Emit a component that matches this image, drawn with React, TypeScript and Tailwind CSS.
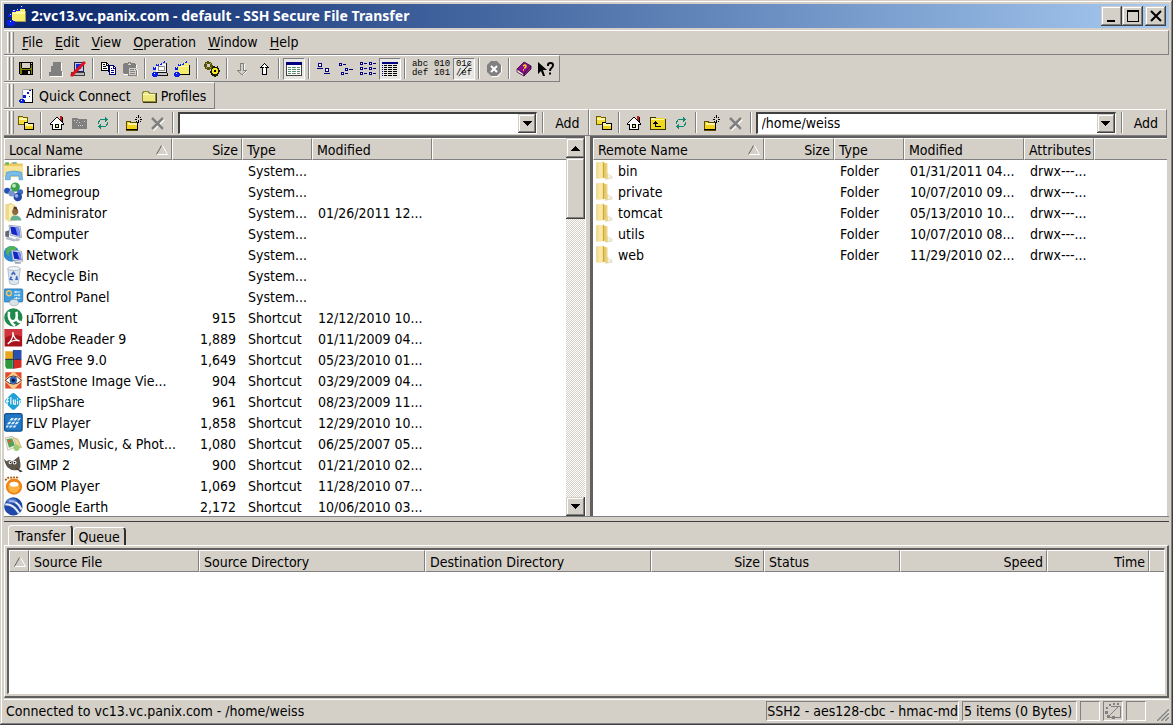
import { useState, type ReactNode } from 'react';

const FONT = "font-['DejaVu_Sans_Condensed','Noto_Sans',sans-serif]";
const RAISED =
  'bg-[#d4d0c8] shadow-[inset_-1px_-1px_#404040,inset_1px_1px_#d4d0c8,inset_-2px_-2px_#808080,inset_2px_2px_#ffffff]';
const SUNKEN = 'border border-t-[#808080] border-r-white border-b-white border-l-[#808080]';
const BAR = 'border-t border-b border-t-white border-b-[#808080]';

interface FileRow {
  name: string;
  icon: ReactNode;
  size?: string;
  type: string;
  modified?: string;
  attributes?: string;
}

interface Column {
  label: string;
  width?: string;
  align?: 'right';
  sorted?: boolean;
}

/* ---------- Icons ---------- */

function Icon({ children, size = 16, smooth = false }: { children: ReactNode; size?: number; smooth?: boolean }) {
  return (
    <svg
      width={size}
      height={size}
      viewBox="0 0 16 16"
      fill="none"
      shapeRendering={smooth ? 'auto' : 'crispEdges'}
      className="shrink-0"
      aria-hidden="true"
    >
      {children}
    </svg>
  );
}

const PALETTE: Record<string, string> = {
  K: '#000000',
  Y: '#808000',
  G: '#808080',
  W: '#ffffff',
  B: '#000080',
  L: '#d4d0c8',
  C: '#ece878',
  T: '#0e8a72',
  R: '#c81818',
};

function Bitmap({ rows }: { rows: string[] }) {
  return (
    <svg
      width={rows[0].length}
      height={rows.length}
      viewBox={`0 0 ${rows[0].length} ${rows.length}`}
      shapeRendering="crispEdges"
      className="shrink-0"
      aria-hidden="true"
    >
      {rows.flatMap((row, y) =>
        row.split('').map((c, x) =>
          PALETTE[c] ? <rect key={`${x}-${y}`} x={x} y={y} width="1" height="1" fill={PALETTE[c]} /> : null
        )
      )}
    </svg>
  );
}

const SAVE = [
  'KKKKKKKKKKKKKK',
  'KYKLLLLLLLLKLK',
  'KYKLLLLLLLLKKK',
  'KYKLLLLLLLLKYK',
  'KYKLLLLLLLLKYK',
  'KYKLLLLLLLLKYK',
  'KYYKKKKKKKKYYK',
  'KYYYYYYYYYYYYK',
  'KYYKKKKKKKKKYK',
  'KYYKKKKKKLLKYK',
  'KYYKKKKKKLLKYK',
  'KYYKKKKKKLLKYK',
  '.KKKKKKKKKKKKK',
];

const COPY = [
  'KKKKKK.........',
  'KWWWWKK........',
  'KWKKWKWK.......',
  'KWWWWKKKBBBBB..',
  'KWKKKWWKBWWWBB.',
  'KWWWWWWKBWWWBWB',
  'KWKKKKWKBWBWBBB',
  'KWWWWWWKBWWWWWB',
  'KKKKKKKKBWBBBWB',
  '.......BBWWWWWB',
  '........BWBBBWB',
  '........BWWWWWB',
  '........BBBBBBB',
];

const PASTE = [
  '.....GGG.......',
  '.GGGGG.GGGGG...',
  'GGGGG...GGGGG..',
  'GGGGGGGGGGGGGW.',
  'GGGGGGGGGGGGGW.',
  'GGGGGGGGGGGGGW.',
  'GGGGGGLLLLLL...',
  'GGGGGGLGGGGLGW.',
  'GGGGGGLLLLLLLGW',
  'GGGGGGLGGGGGLGW',
  'GGGGGGLLLLLLLGW',
  '.GGGGGLGGGGGLGW',
  '.WWWWGLLLLLLLGW',
  '.....GGGGGGGGGW',
];

const UP = [
  '.....K.....',
  '....KWK....',
  '...KWWWK...',
  '..KWWWWWK..',
  '.KKKKWKKKK.',
  '...KWWWK...',
  '...KWWWK...',
  '...KWWWK...',
  '...KWWWK...',
  '...KWWWK...',
  '...KWWWK...',
  '...KKKKK...',
];

const DOWN = [
  '...GGGG....',
  '...GLLGW...',
  '...GLLGW...',
  '...GLLGW...',
  '...GLLGW...',
  '...GLLGW...',
  '...GLLGW...',
  'GGGGLLGGGG.',
  '.GLLLLLLGW.',
  '..GLLLLGW..',
  '...GLLGW...',
  '....GGW....',
];

const LARGE_ICONS = [
  '.BBBB.........',
  '.BWWB.........',
  '.BWWB.........',
  '.BBBB.........',
  '..............',
  'BBBBBB..BBBB..',
  '........BWWB..',
  '........BWWB..',
  '........BBBB..',
  '..............',
  '.......BBBBBB.',
];

const SMALL_ICONS = [
  'BBB...........',
  'BWB.BBB.......',
  'BBB...........',
  '..............',
  '..............',
  '......BBB.....',
  '......BWB.BBBB',
  '......BBB.....',
  '..............',
  '..BBB.........',
  '..BWB.BBB.....',
  '..BBB.........',
];

const LIST_ICONS = [
  'BBB......BBB....',
  'BWB.BBB..BWB.BBB',
  'BBB......BBB....',
  '................',
  '................',
  'BBB......BBB....',
  'BWB.BBB..BWB.BBB',
  'BBB......BBB....',
  '................',
  '................',
  'BBB......BBB....',
  'BWB.BBB..BWB.BBB',
  'BBB......BBB....',
];

const DETAILS = [
  'BBBBBBBBBBBBBBBB',
  'BBBBBBBBBBBBBBBB',
  '................',
  'B.KKK.KKKK.KKKK.',
  '................',
  'B.KKK.KKKK.KKKK.',
  '................',
  'B.KKK.KKKK.KKKK.',
  '................',
  'B.KKK.KKKK.KKKK.',
  '................',
  'B.KKK.KKKK.KKKK.',
  '................',
  'B.KKK.KKKK.KKKK.',
];

const REFRESH = [
  '........T...',
  '........TT..',
  '...TTTTTTTT.',
  '..T.....TT..',
  '.TT.....T...',
  '.T........T.',
  '.T........T.',
  '...T.....TT.',
  '..TT.....T..',
  '.TTTTTTTT...',
  '..TT........',
  '...T........',
];

const HOME = [
  '..........RR...',
  '......KK..RRK..',
  '.....KWWK.RRK..',
  '....KWWWWKRRK..',
  '...KWWWWWWKRK..',
  '..KWWWWWWWWKK..',
  '.KWWWWWWWWWWK..',
  'KWWWWWWWWWWWWK.',
  'KKKWWKKKKWWKKK.',
  '..KWWKCCKWWK...',
  '..KWWKCCKWWK...',
  '..KWWKKKKWWK...',
  '..KWWWWWWWWK...',
  '..KKKKKKKKKK...',
];

function Molecule() {
  return (
    <g fill="#0a1eea">
      <rect x="1" y="11" width="4" height="5" />
      <rect x="0" y="12" width="6" height="3" />
      <rect x="1" y="6" width="3" height="3" />
      <rect x="4" y="3" width="3" height="2" />
      <rect x="8" y="2" width="2" height="2" />
      <rect x="11" y="0" width="2" height="2" />
      <path d="M2 12h1v1H2zM2 6h1v1H2zM5 3h1v1H5zM8 2h1v1H8zM11 0h1v1h-1z" fill="#dfe6ff" />
    </g>
  );
}

function ConnectDisabled() {
  return (
    <Icon>
      <path d="M6 2h8v9h1v5H2v-4h2V6h2z" fill="#fff" />
      <path d="M5 1h8v9h1v5H1v-4h2V5h2z" fill="#808080" />
    </Icon>
  );
}

function Disconnect() {
  return (
    <Icon>
      <path d="M4 1h9v9H4z" fill="#c8c8d8" stroke="#202060" />
      <path d="M6 3h5v5H6z" fill="#1a2ed6" />
      <path d="M1 11h13v3H1z" fill="#b8b8b8" stroke="#404040" />
      <g shapeRendering="auto">
        <path d="M1 15 15 1" stroke="#e0101c" strokeWidth="3" />
      </g>
    </Icon>
  );
}

function TerminalConnect() {
  return (
    <Icon>
      <path d="M4 3h10v8H4z" fill="#f4f4f4" />
      <path d="M14 2h1v10H5v-1h9z" fill="#101010" />
      <path d="M6 5h6v4H6z" fill="#ffffff" stroke="#909090" />
      <path d="M4 12h11v2H4z" fill="#c8c8c8" />
      <path d="M15 12h1v3H5v-1h10z" fill="#101010" />
      <Molecule />
    </Icon>
  );
}

function FolderConnect() {
  return (
    <Icon>
      <path d="M4 4h5l1-2h4l1 2v9H4z" fill="#f4ec6c" />
      <path d="M15 4h1v10H5v-1h10z" fill="#000" />
      <path d="M5 5h10v1H5z" fill="#fff8b0" />
      <Molecule />
    </Icon>
  );
}

function QuickConnectIcon() {
  return (
    <Icon>
      <path d="M4 2h9v12H4z" fill="#fff" />
      <path d="M13 1h1v14H4v-1h9z" fill="#000" />
      <path d="M4 1h9v1H4zM3 2h1v10H3z" fill="#a0a0a0" />
      <g fill="#0a1ed2">
        <path d="M1 11h4v4H1zM0 12h6v2H0zM4 7h3v3H4zM8 4h2v2H8zM10 8h1v1h-1zM10 2h2v1h-2z" />
        <path d="M2 12h1v1H2z" fill="#fff" />
      </g>
    </Icon>
  );
}

function ProfilesIcon() {
  return (
    <Icon>
      <path d="M1 4h1V3h5v1h1v1h6v8H1z" fill="#ece87c" stroke="#8c8840" />
      <path d="M2 6h12" stroke="#fffbc0" />
      <path d="M15 5v9H2" stroke="#3c3810" />
    </Icon>
  );
}

function Gears() {
  return (
    <Icon>
      <path d="M3 0h2v1h2v1h1v2h1v2H8v2H6v1H3V8H1V6H0V3h1V1h2z" fill="#55520e" />
      <path d="M3 3h3v3H3z" fill="#d4d0c8" />
      <path d="M2 2h1v1H2zM6 2h1v1H6zM2 6h1v1H2zM6 6h1v1H6z" fill="#b8b020" />
      <path d="M9 5h2v1h2V5h1v2h1v2h1v2h-1v2h-1v2h-2v1h-2v-1H8v-1H7v-2H6v-2h1V8h1V6h1z" fill="#1c1a00" />
      <path d="M9 7h4v1h1v4h-1v1H9v-1H8V8h1z" fill="#f5e71c" />
      <path d="M10 9h2v2h-2z" fill="#000" />
    </Icon>
  );
}

function TransferView() {
  return (
    <Icon>
      <path d="M0 2h15v12H0z" fill="#fff" />
      <path d="M0 1h16v3H0z" fill="#000080" />
      <path d="M0 4h1v10H0zM15 4h1v11H0v-1h15z" fill="#404040" />
      <path
        d="M2 6h3v1H2zM6 6h4v1H6zM11 6h3v1h-3zM2 8h3v1H2zM6 8h4v1H6zM11 8h3v1h-3zM2 10h3v1H2zM6 10h4v1H6zM11 10h3v1h-3zM2 12h3v1H2zM6 12h4v1H6zM11 12h3v1h-3z"
        fill="#5c8c70"
      />
    </Icon>
  );
}

function StopIcon() {
  return (
    <Icon smooth>
      <path d="M6 1h6l4 4v6l-4 5H6l-4-4z" fill="#fff" />
      <path d="M5 0h6l4 4v7l-4 4H5l-4-4V4z" fill="#808080" />
      <path d="m5 5 6 6M11 5l-6 6" stroke="#fff" strokeWidth="2" />
    </Icon>
  );
}

function HelpBook() {
  return (
    <Icon smooth>
      <path d="m1 8 7-7 7 4-7 8z" fill="#8c0c8c" stroke="#2c002c" strokeWidth=".8" />
      <path d="m1 8 7 5v2l-7-4z" fill="#f4f0e0" stroke="#500050" strokeWidth=".8" />
      <path d="m8 13 7-8v3l-7 7z" fill="#a01898" stroke="#2c002c" strokeWidth=".8" />
      <path d="M7 5q3-2 3 0T8 7M7 9h1" stroke="#f5e020" strokeWidth="1.4" />
    </Icon>
  );
}

function ContextHelp() {
  return (
    <Icon smooth>
      <path d="M0 1v12l3-3 2 5h2L5 9h4z" fill="#000" />
      <path d="M10 5V4q0-2 2.500-2T15 4q0 2-1.500 3T12 10M11 12.500h2" stroke="#000" strokeWidth="2" />
    </Icon>
  );
}

function Folders() {
  return (
    <Icon>
      <path d="M0 1h4l1 1h4v7H0z" fill="#f3dc3c" stroke="#705c00" />
      <path d="M1 3h8v2H1z" fill="#fff7a8" />
      <path d="M6 7h3l1 1h5v6H6z" fill="#f3d01c" stroke="#000" />
      <path d="M7 8h3v1h5v2H7z" fill="#fff59c" />
    </Icon>
  );
}

function FolderUp({ disabled = false }: { disabled?: boolean }) {
  if (disabled) {
    return (
      <Icon>
        <path d="M0 3h6v1h9v10H0z" fill="#808080" />
        <path d="M2 5h1v1H2zM5 5h1v1H5zM4 7h1v1H4zM7 7h1v1H7zM6 10h1v1H6zM8 10h1v1H8zM10 10h1v1h-1zM12 6h1v1h-1z" fill="#d4d0c8" />
      </Icon>
    );
  }
  return (
    <Icon>
      <path d="M0 2h6v1h9v11H0z" fill="#f0d820" />
      <path d="M1 3h4v1h9v1H1z" fill="#fff8a0" />
      <path d="M0 2h6v1H0zM0 2h1v12H0zM15 4h1v11H0v-1h15z" fill="#3c3400" />
      <path d="M5 6h1v1h1v1h1v1H6v2h5v1H5V9H3V8h1V7h1z" fill="#000" />
    </Icon>
  );
}

function NewFolder() {
  return (
    <Icon>
      <path d="M0 6h4v1h7v8H0z" fill="#f3d01c" stroke="#5c4c00" />
      <path d="M2 8h10v2H2z" fill="#fff59c" />
      <path d="M11 7h1v8H0v-1h11z" fill="#000" />
      <path d="M12 0h1v3h-1zM12 5h1v3h-1zM9 4h2v1H9zM14 4h2v1h-2zM10 2h1v1h-1zM14 2h1v1h-1zM14 6h1v1h-1zM10 6h1v1h-1z" fill="#000" />
    </Icon>
  );
}

function DeleteIcon() {
  return (
    <Icon smooth>
      <path d="m3 4 10 10M14 4 3 15" stroke="#fff" strokeWidth="2.500" />
      <path d="m2 3 11 11M13 3 2 14" stroke="#808080" strokeWidth="2.500" />
    </Icon>
  );
}

function FolderIcon() {
  return (
    <Icon size={20} smooth>
      <path d="m8 9 5 3v2l-6 1z" fill="#e0dac8" />
      <path d="M0 1h4v13H0z" fill="#f0dc98" />
      <path d="m5 1 4 1v11l-4 1z" fill="#e6ca6c" />
      <path d="m2 2 4-2v13l-4 1.500z" fill="#f8e8a4" />
      <path d="M6 1v12.500" stroke="#cfa93c" strokeWidth="1" />
      <path d="M9 2v8l2 2v2l-3 .5V2z" fill="#ead384" />
      <path d="m9.500 9.500 2.500 2.500v1.500l-2.500.5z" fill="#f4efdc" />
    </Icon>
  );
}

function LibrariesIcon() {
  return (
    <Icon size={20} smooth>
      <path d="M0 2h5l1-1h4l1 1h4v9H0z" fill="#ecc95c" />
      <path d="M1 1h3v2H1z" fill="#68b068" />
      <path d="M7 1h3v1H7z" fill="#50a0d8" />
      <path d="M0 4h15v9H0z" fill="#f8e496" />
      <path d="M2 9q6-2 12 0l1 6h-3v-3H5v3H1z" fill="#78bce8" stroke="#4c94c8" strokeWidth=".5" />
    </Icon>
  );
}

function HomegroupIcon() {
  return (
    <Icon size={20} smooth>
      <path d="m3 7 6-4 3 8z" stroke="#a0b8d0" strokeWidth="1.5" />
      <circle cx="2.5" cy="7" r="2.4" fill="#2450b8" />
      <circle cx="6" cy="9" r="2.5" fill="#7894cc" />
      <circle cx="9" cy="4" r="3.7" fill="#3da04c" />
      <circle cx="8" cy="3" r="1.6" fill="#b8e8b4" />
      <circle cx="13" cy="8" r="2.3" fill="#3868c0" />
      <circle cx="11" cy="12" r="3.4" fill="#2548a4" />
      <circle cx="10" cy="11" r="1.5" fill="#90b0ec" />
    </Icon>
  );
}

function UserIcon() {
  return (
    <Icon size={20} smooth>
      <path d="M1 1 6 0l3 2v12l-5 1-3-2z" fill="#f0d88c" />
      <path d="M4 2 7 1v13l-3 1z" fill="#fbeeb4" />
      <circle cx="9" cy="7" r="2.5" fill="#8c6840" />
      <path d="M5 14q0-4 4-4t5 4z" fill="#68b094" />
      <path d="M7 6q1-3 4 0l-1-3H8z" fill="#4c3420" />
    </Icon>
  );
}

function ComputerIcon() {
  return (
    <Icon size={20} smooth>
      <path d="m4 1 9 1 1 9-9-2z" fill="#e8ecf4" stroke="#8890a4" strokeWidth=".6" />
      <path d="m5 2 7 1 1 7-7-2z" fill="#1426c4" />
      <path d="M9 2.500 12 3l1 7-2-.5z" fill="#7890f0" />
      <path d="m1 6 3-1v6l-3-1z" fill="#606874" />
      <path d="m3 10 8 3-3 1-7-2zM9 11l4 1v1l-3 1z" fill="#b4bccc" />
    </Icon>
  );
}

function NetworkIcon() {
  return (
    <Icon size={20} smooth>
      <circle cx="6" cy="7" r="6.3" fill="#2c88d0" />
      <path d="M2 3q4-4 8-1-1 3-4 3t-2 4q-3-1-2-6z" fill="#52b450" />
      <path d="m6 4 8 1 1 8-8-1z" fill="#eef0f6" stroke="#8890a4" strokeWidth=".6" />
      <path d="m7 5 6 1 1 6-6-1z" fill="#1426c4" />
      <path d="m10.500 5.600 2.500.4 1 6-1.500-.2z" fill="#7890f0" />
      <path d="m8 13 6 1-1 1H9z" fill="#98a4b4" />
    </Icon>
  );
}

function RecycleIcon() {
  return (
    <Icon size={20} smooth>
      <path d="M3 2h10l-1.500 12q-3.500 2-7 0z" fill="#dce6ee" stroke="#a8b8c4" strokeWidth=".7" />
      <ellipse cx="8" cy="2" rx="5" ry="1.500" fill="#f4f8fa" stroke="#a8b4bc" strokeWidth=".7" />
      <path d="M6 7 7.500 5l1.500 2M10 8l.5 2.500H9M7 11l-2-.5L6 8.500" stroke="#4068c0" strokeWidth="1.300" />
    </Icon>
  );
}

function ControlPanelIcon() {
  return (
    <Icon size={20} smooth>
      <rect y="1.500" width="15" height="10.500" rx="1" fill="#3c9cdc" stroke="#2470b0" strokeWidth=".6" />
      <circle cx="4" cy="5" r="2" stroke="#f4c860" strokeWidth="1.200" />
      <path d="M8 4h5M8 6.500h5M8 9h5M9.500 3v2M12 5.500v2M10 8v2" stroke="#dff2fc" strokeWidth=".8" />
      <ellipse cx="8" cy="12.500" rx="3.500" ry="2.500" fill="#dce2e8" stroke="#98a4ac" strokeWidth=".5" />
    </Icon>
  );
}

function UTorrentIcon() {
  return (
    <Icon size={20} smooth>
      <circle cx="7.500" cy="7.500" r="7.300" fill="#1f8a4c" />
      <path d="M4 3q-1 8 3.500 7.500Q11 10 10 3M10 8q1 4 4 3M5 9q1 4 4 5" stroke="#fff" strokeWidth="2" />
    </Icon>
  );
}

function AdobeIcon() {
  return (
    <Icon size={20} smooth>
      <rect x=".5" width="14" height="14" fill="#a8141c" />
      <path d="M.5 0h14v6q-7-3-14 1z" fill="#d0343c" />
      <path d="M7 2.500q1 5-4 9.500Q7 8 12.500 9.500 8 9 7 2.500z" stroke="#fff" strokeWidth="1" />
    </Icon>
  );
}

function AvgIcon() {
  return (
    <Icon size={20} smooth>
      <path d="M1 1h6l1 3-1 4H1z" fill="#e8a81c" />
      <path d="M8 0h6v7q-3 1-6 0z" fill="#2850b0" />
      <path d="M1 8q3-2 6 0v7H2l-1-2z" fill="#2c9838" />
      <path d="M8 8q3-2 6 0v6l-6 1z" fill="#d42c24" />
      <path d="M7.500 0v15M1 7.500h13" stroke="#183060" strokeWidth=".8" />
    </Icon>
  );
}

function FastStoneIcon() {
  return (
    <Icon size={20} smooth>
      <rect x="1" y="1" width="13" height="13" fill="#e04c28" />
      <path d="m7.500 0 7.500 7.500L7.500 15 0 7.500z" fill="#fbc890" />
      <path d="M1 7.500q6.500-7 13 0-6.500 6-13 0z" fill="#fff" stroke="#5c3420" strokeWidth=".8" />
      <circle cx="7.500" cy="7.300" r="2.900" fill="#2c5cb0" />
      <circle cx="7.500" cy="7.300" r="1.200" fill="#06112c" />
    </Icon>
  );
}

function FlipIcon() {
  return (
    <Icon size={20} smooth>
      <rect x="2.200" y="2.200" width="10.600" height="10.600" rx="2" transform="rotate(45 7.500 7.500)" fill="#1ea0d8" />
      <path d="M2.500 11V6.500Q2.500 5 4 5M1.500 7.500H4M5.500 4v6M7.500 6v3q0 1 1.500 1V6M10.800 5v1M10.800 7v3M12.600 12V7h1.400v2.500h-1.400" stroke="#fff" strokeWidth=".9" />
    </Icon>
  );
}

function FlvIcon() {
  return (
    <Icon size={20} smooth>
      <rect x=".5" y=".5" width="14" height="14" rx="1.500" fill="#2078c4" stroke="#105090" />
      <path
        d="M6 4h2L6.500 6H4.200zM9 4h2L9.500 6h-2zM12 4h1.500L12 6h-1.500zM4 7h2L4.500 9H2.300zM7 7h2L7.500 9h-2zM10 7h2l-1.500 2h-2zM2 10h2l-1.200 1.500H1.500zM5 10h2l-1.200 1.500h-2zM8 10h2l-1.200 1.500h-2z"
        fill="#e4f2fc"
      />
    </Icon>
  );
}

function GamesIcon() {
  return (
    <Icon size={20} smooth>
      <path d="m5 2 6 2 3 7-9-1z" fill="#f0d890" stroke="#b89c58" strokeWidth=".5" />
      <path d="m1 3 6-1 3 8-7 3z" fill="#f8f4e8" stroke="#a8a490" strokeWidth=".5" />
      <path d="m2 4 4.500-.6L8.700 9 4 11z" fill="#58a058" />
      <circle cx="4.500" cy="5.500" r="1.200" fill="#e05c38" />
      <circle cx="10" cy="11" r="2.500" fill="#9ccc74" />
    </Icon>
  );
}

function GimpIcon() {
  return (
    <Icon size={20} smooth>
      <path d="m0 3 2 2 2-1 3 1 5-4 1 5q1 5-2 6-5 1-8-2-2-2-3-7z" fill="#5c564c" />
      <circle cx="5" cy="6" r="1.300" fill="#fff" />
      <circle cx="8.500" cy="6" r="1.500" fill="#fff" />
      <circle cx="5.200" cy="6" r=".6" fill="#000" />
      <circle cx="8.400" cy="6" r=".7" fill="#000" />
      <path d="m9 10 6 3-2 .8z" fill="#302c28" />
    </Icon>
  );
}

function GomIcon() {
  return (
    <Icon size={20} smooth>
      <circle cx="8" cy="8.500" r="6.500" fill="#f08418" />
      <circle cx="8" cy="9" r="4.500" fill="#fbb040" />
      <ellipse cx="8" cy="6.500" rx="3.500" ry="2" fill="#fff" />
      <path d="M1 3.500Q3 1 5 1" stroke="#a85c10" strokeWidth="1.600" strokeDasharray="1.500 .8" />
      <path d="M5 1.500q4-1 7 0" stroke="#a85c10" strokeWidth="1.400" strokeDasharray="1.500 .8" />
    </Icon>
  );
}

function EarthIcon() {
  return (
    <Icon size={20} smooth>
      <circle cx="7.500" cy="7.500" r="7.300" fill="#2048a8" />
      <path d="M1 6q6-1 11 7M4 3q7 0 10 7" stroke="#e4ecf8" strokeWidth="1.700" />
      <ellipse cx="6" cy="3" rx="4" ry="2" fill="#6890d8" opacity=".6" />
    </Icon>
  );
}

/* ---------- Data ---------- */

const localFiles: FileRow[] = [
  { name: 'Libraries', icon: <LibrariesIcon />, type: 'System...' },
  { name: 'Homegroup', icon: <HomegroupIcon />, type: 'System...' },
  { name: 'Adminisrator', icon: <UserIcon />, type: 'System...', modified: '01/26/2011 12...' },
  { name: 'Computer', icon: <ComputerIcon />, type: 'System...' },
  { name: 'Network', icon: <NetworkIcon />, type: 'System...' },
  { name: 'Recycle Bin', icon: <RecycleIcon />, type: 'System...' },
  { name: 'Control Panel', icon: <ControlPanelIcon />, type: 'System...' },
  { name: 'µTorrent', icon: <UTorrentIcon />, size: '915', type: 'Shortcut', modified: '12/12/2010 10...' },
  { name: 'Adobe Reader 9', icon: <AdobeIcon />, size: '1,889', type: 'Shortcut', modified: '01/11/2009 04...' },
  { name: 'AVG Free 9.0', icon: <AvgIcon />, size: '1,649', type: 'Shortcut', modified: '05/23/2010 01...' },
  { name: 'FastStone Image Vie...', icon: <FastStoneIcon />, size: '904', type: 'Shortcut', modified: '03/29/2009 04...' },
  { name: 'FlipShare', icon: <FlipIcon />, size: '961', type: 'Shortcut', modified: '08/23/2009 11...' },
  { name: 'FLV Player', icon: <FlvIcon />, size: '1,858', type: 'Shortcut', modified: '12/29/2010 10...' },
  { name: 'Games, Music, & Phot...', icon: <GamesIcon />, size: '1,080', type: 'Shortcut', modified: '06/25/2007 05...' },
  { name: 'GIMP 2', icon: <GimpIcon />, size: '900', type: 'Shortcut', modified: '01/21/2010 02...' },
  { name: 'GOM Player', icon: <GomIcon />, size: '1,069', type: 'Shortcut', modified: '11/28/2010 07...' },
  { name: 'Google Earth', icon: <EarthIcon />, size: '2,172', type: 'Shortcut', modified: '10/06/2010 03...' },
];

const remoteFiles: FileRow[] = [
  { name: 'bin', icon: <FolderIcon />, type: 'Folder', modified: '01/31/2011 04...', attributes: 'drwx---...' },
  { name: 'private', icon: <FolderIcon />, type: 'Folder', modified: '10/07/2010 09...', attributes: 'drwx---...' },
  { name: 'tomcat', icon: <FolderIcon />, type: 'Folder', modified: '05/13/2010 10...', attributes: 'drwx---...' },
  { name: 'utils', icon: <FolderIcon />, type: 'Folder', modified: '10/07/2010 08...', attributes: 'drwx---...' },
  { name: 'web', icon: <FolderIcon />, type: 'Folder', modified: '11/29/2010 02...', attributes: 'drwx---...' },
];

const localColumns: Column[] = [
  { label: 'Local Name', width: 'w-[168px]', sorted: true },
  { label: 'Size', width: 'w-[70px]', align: 'right' },
  { label: 'Type', width: 'w-[70px]' },
  { label: 'Modified', width: 'w-[120px]' },
];

const remoteColumns: Column[] = [
  { label: 'Remote Name', width: 'w-[171px]', sorted: true },
  { label: 'Size', width: 'w-[70px]', align: 'right' },
  { label: 'Type', width: 'w-[70px]' },
  { label: 'Modified', width: 'w-[120px]' },
  { label: 'Attributes', width: 'w-[70px]' },
];

const transferColumns: Column[] = [
  { label: '', width: 'w-[20px]', sorted: true },
  { label: 'Source File', width: 'w-[170px]' },
  { label: 'Source Directory', width: 'w-[226px]' },
  { label: 'Destination Directory', width: 'w-[226px]' },
  { label: 'Size', width: 'w-[113px]', align: 'right' },
  { label: 'Status', width: 'w-[136px]' },
  { label: 'Speed', width: 'w-[147px]', align: 'right' },
  { label: 'Time', width: 'w-[102px]', align: 'right' },
];

const menus = ['File', 'Edit', 'View', 'Operation', 'Window', 'Help'];

/* ---------- Shared controls ---------- */

function Grip() {
  return (
    <div className="mr-px flex gap-px self-stretch py-px pl-[3px]">
      <div className="w-[3px] border-l border-r border-l-white border-r-[#808080]" />
      <div className="w-[3px] border-l border-r border-l-white border-r-[#808080]" />
    </div>
  );
}

function Separator() {
  return <div className="mx-[3px] my-[2px] w-[2px] self-stretch border-l border-r border-l-[#808080] border-r-white" />;
}

function ToolButton({ label, pressed, children }: { label: string; pressed?: boolean; children: ReactNode }) {
  return (
    <button
      type="button"
      aria-label={label}
      aria-pressed={pressed}
      className={`flex h-[22px] w-[22px] shrink-0 items-center justify-center ${pressed ? `bg-[#e9e7e3] ${SUNKEN}` : ''}`}
    >
      {children}
    </button>
  );
}

function CodeGlyph({ top, bottom, struck }: { top: string; bottom: string; struck?: boolean }) {
  return (
    <span className="relative flex flex-col font-['Liberation_Mono',monospace] text-[9px] leading-[9px]">
      <span>{top}</span>
      <span>{bottom}</span>
      {struck && (
        <svg viewBox="0 0 18 18" className="absolute inset-0 h-full w-full" aria-hidden="true">
          <path d="M3 17 16 2" stroke="#000" />
        </svg>
      )}
    </span>
  );
}

function SortMark() {
  return (
    <svg width="12" height="10" viewBox="0 0 12 10" fill="none" className="shrink-0" aria-hidden="true">
      <path d="M.5 9.500h11L6.500.5" stroke="#fff" />
      <path d="M.5 9.500 5.500.5" stroke="#606060" />
    </svg>
  );
}

function HeaderRow({ columns }: { columns: Column[] }) {
  return (
    <thead>
      <tr>
        {columns.map(col => (
          <th
            key={col.label}
            scope="col"
            aria-sort={col.sorted ? 'ascending' : undefined}
            className={`h-[22px] border-t border-r border-b border-l border-t-white border-r-[#808080] border-b-[#808080] border-l-white bg-[#d4d0c8] p-0 pt-px font-normal ${
              col.width ?? ''
            } ${col.align === 'right' ? 'pr-[3px] text-right' : 'pl-1 text-left'}`}
          >
            {col.sorted ? (
              <span className="flex items-center justify-between pr-[3px]">
                {col.label}
                <SortMark />
              </span>
            ) : (
              col.label
            )}
          </th>
        ))}
        <th className="border-t border-b border-l border-t-white border-b-[#808080] border-l-white bg-[#d4d0c8]" />
      </tr>
    </thead>
  );
}

function FileTable({ columns, files, label }: { columns: Column[]; files: FileRow[]; label: string }) {
  const hasAttributes = columns.length > 4;
  return (
    <table aria-label={label} className="w-full table-fixed border-separate border-spacing-0 whitespace-nowrap">
      <HeaderRow columns={columns} />
      <tbody>
        {files.map(file => (
          <tr key={file.name} className="h-[21px]">
            <td className={`py-0 pr-0 ${hasAttributes ? 'pl-[3px]' : 'pl-0'}`}>
              <span className="flex h-[21px] items-center gap-[2px]">
                {file.icon}
                {file.name}
              </span>
            </td>
            <td className="px-[6px] py-0 text-right">{file.size}</td>
            <td className="px-[6px] py-0">{file.type}</td>
            <td className="px-[6px] py-0">{file.modified}</td>
            {hasAttributes && <td className="px-[6px] py-0">{file.attributes}</td>}
            <td />
          </tr>
        ))}
      </tbody>
    </table>
  );
}

function Arrow({ up }: { up?: boolean }) {
  return (
    <svg width="9" height="5" viewBox="0 0 9 5" shapeRendering="crispEdges" aria-hidden="true">
      <path d={up ? 'M4 0h1v1h1v1h1v1h1v1h1v1H0V4h1V3h1V2h1V1h1z' : 'M0 0h9v1H8v1H7v1H6v1H5v1H4V4H3V3H2V2H1V1H0z'} fill="#000" />
    </svg>
  );
}

function AddressBar({ id, label, initial, remote }: { id: string; label: string; initial: string; remote?: boolean }) {
  const [path, setPath] = useState(initial);

  return (
    <div
      role="toolbar"
      aria-label={label}
      className={`flex h-[27px] min-w-0 items-center border-r border-r-[#808080] ${BAR} ${remote ? 'flex-[578]' : 'flex-[584]'}`}
    >
      {remote ? <div className="w-1 shrink-0 self-stretch border-l border-l-white" /> : <Grip />}
      <ToolButton label="Show folders"><Folders /></ToolButton>
      <Separator />
      <div className="flex gap-px pl-px">
        <ToolButton label="Home"><Bitmap rows={HOME} /></ToolButton>
        <ToolButton label="Up one level"><FolderUp disabled={!remote} /></ToolButton>
        <ToolButton label="Refresh"><Bitmap rows={REFRESH} /></ToolButton>
      </div>
      <Separator />
      <div className="flex gap-[2px] pl-px">
        <ToolButton label="New folder"><NewFolder /></ToolButton>
        <ToolButton label="Delete"><DeleteIcon /></ToolButton>
      </div>
      <Separator />
      <div className="ml-px flex h-[22px] min-w-0 flex-1 border-t-2 border-r border-b border-l-2 border-t-[#404040] border-r-white border-b-white border-l-[#404040] bg-white">
        <input
          id={id}
          aria-label={`${label} path`}
          value={path}
          onChange={e => setPath(e.target.value)}
          className="min-w-0 flex-1 bg-white px-1 outline-none"
        />
        <button type="button" aria-label="Path history" className={`flex w-[18px] items-center justify-center ${RAISED}`}>
          <Arrow />
        </button>
      </div>
      <div className="w-[2px]" />
      <Separator />
      <button type="button" className="px-2">Add</button>
    </div>
  );
}

/* ---------- App ---------- */

export default function App() {
  const [activeTab, setActiveTab] = useState('Transfer');

  return (
    <div className={`flex h-screen flex-col overflow-hidden p-1 text-[14px] leading-[18px] text-black ${FONT} ${RAISED}`}>
      {/* Title bar */}
      <header className="flex h-6 shrink-0 items-center gap-1 bg-linear-to-r from-[#0a246a] to-[#a6caf0] px-[3px]">
        <Icon size={20}>
          <path d="M4 4h4l1-2h5v10H4z" fill="#f4ec6c" />
          <path d="M5 5h9v1H5z" fill="#fff8b0" />
          <path d="M14 4h1v9H4v-1h10z" fill="#a09850" />
          <Molecule />
        </Icon>
        <h1 className="flex-1 truncate font-['Noto_Sans',sans-serif] text-[14px] font-bold text-white">
          2:vc13.vc.panix.com - default - SSH Secure File Transfer
        </h1>
        <div className="flex">
          <button type="button" aria-label="Minimize" className={`flex h-5 w-[21px] items-center justify-center ${RAISED}`}>
            <svg width="12" height="12" viewBox="0 0 12 12" shapeRendering="crispEdges"><path d="M1 10h8v2H1z" /></svg>
          </button>
          <button type="button" aria-label="Maximize" className={`flex h-5 w-[21px] items-center justify-center ${RAISED}`}>
            <svg width="12" height="12" viewBox="0 0 12 12" shapeRendering="crispEdges"><path d="M0 0h12v12H0zM1 2v9h10V2z" fillRule="evenodd" /></svg>
          </button>
          <button type="button" aria-label="Close" className={`ml-[2px] flex h-5 w-[21px] items-center justify-center ${RAISED}`}>
            <svg width="12" height="12" viewBox="0 0 12 12"><path d="m1 1 10 10M11 1 1 11" stroke="#000" strokeWidth="2" /></svg>
          </button>
        </div>
      </header>

      {/* Menu */}
      <nav className={`mt-[2px] flex h-[25px] shrink-0 items-center border-r border-r-[#808080] ${BAR}`}>
        <Grip />
        <div className="flex pb-[2px] pl-px">
          {menus.map(item => (
            <button key={item} type="button" className="px-[6px]">
              <span className="underline underline-offset-2">{item[0]}</span>
              {item.slice(1)}
            </button>
          ))}
        </div>
      </nav>

      {/* Main toolbar */}
      <div role="toolbar" aria-label="Main" className={`flex h-[27px] items-center self-start border-r border-r-[#808080] pr-[2px] ${BAR}`}>
        <Grip />
        <ToolButton label="Save"><Bitmap rows={SAVE} /></ToolButton>
        <Separator />
        <ToolButton label="Connect"><ConnectDisabled /></ToolButton>
        <ToolButton label="Disconnect"><Disconnect /></ToolButton>
        <Separator />
        <ToolButton label="Copy"><Bitmap rows={COPY} /></ToolButton>
        <ToolButton label="Paste"><Bitmap rows={PASTE} /></ToolButton>
        <Separator />
        <ToolButton label="New terminal"><TerminalConnect /></ToolButton>
        <ToolButton label="New file transfer"><FolderConnect /></ToolButton>
        <Separator />
        <ToolButton label="Settings"><Gears /></ToolButton>
        <Separator />
        <ToolButton label="Download"><Bitmap rows={DOWN} /></ToolButton>
        <ToolButton label="Upload"><Bitmap rows={UP} /></ToolButton>
        <Separator />
        <ToolButton label="Transfer view" pressed><TransferView /></ToolButton>
        <Separator />
        <ToolButton label="Large icons"><Bitmap rows={LARGE_ICONS} /></ToolButton>
        <ToolButton label="Small icons"><Bitmap rows={SMALL_ICONS} /></ToolButton>
        <ToolButton label="List"><Bitmap rows={LIST_ICONS} /></ToolButton>
        <ToolButton label="Details" pressed><Bitmap rows={DETAILS} /></ToolButton>
        <Separator />
        <ToolButton label="ASCII"><CodeGlyph top="abc" bottom="def" /></ToolButton>
        <ToolButton label="Binary"><CodeGlyph top="010" bottom="101" /></ToolButton>
        <ToolButton label="Auto select" pressed><CodeGlyph top="01c" bottom="/ef" struck /></ToolButton>
        <Separator />
        <ToolButton label="Stop"><StopIcon /></ToolButton>
        <Separator />
        <ToolButton label="Help"><HelpBook /></ToolButton>
        <ToolButton label="Context help"><ContextHelp /></ToolButton>
      </div>

      {/* Profiles toolbar */}
      <div role="toolbar" aria-label="Profiles" className={`flex h-[27px] items-center self-start border-r border-r-[#808080] pr-[2px] ${BAR}`}>
        <Grip />
        <button type="button" className="flex items-center gap-1 px-1">
          <QuickConnectIcon />
          Quick Connect
        </button>
        <button type="button" className="flex items-center gap-1 px-[6px]">
          <ProfilesIcon />
          Profiles
        </button>
      </div>

      {/* Address bars */}
      <div className="flex shrink-0">
        <AddressBar id="local-path" label="Local" initial="" />
        <AddressBar id="remote-path" label="Remote" initial="/home/weiss" remote />
        <div className="w-[2px]" />
      </div>

      {/* File panes */}
      <main className="flex min-h-0 flex-[380] border-b border-b-[#808080]">
        <section className="flex min-w-0 flex-[581] border-t-2 border-t-[#606060] bg-white">
          <div className="min-w-0 flex-1 overflow-hidden">
            <FileTable columns={localColumns} files={localFiles} label="Local files" />
          </div>
          <div className="flex w-[19px] flex-col bg-[repeating-conic-gradient(#d4d0c8_0_25%,#ffffff_0_50%)] bg-size-[2px_2px]">
            <button type="button" aria-label="Scroll up" className={`flex h-5 items-center justify-center ${RAISED}`}>
              <Arrow up />
            </button>
            <div className={`h-[61px] ${RAISED}`} />
            <div className="flex-1" />
            <button type="button" aria-label="Scroll down" className={`flex h-[19px] items-center justify-center ${RAISED}`}>
              <Arrow />
            </button>
          </div>
        </section>
        <div className="w-[5px] border-l border-l-white" />
        <section className="min-w-0 flex-[574] overflow-hidden border-t-2 border-l-[3px] border-t-[#606060] border-l-[#606060] bg-white">
          <FileTable columns={remoteColumns} files={remoteFiles} label="Remote files" />
        </section>
        <div className="w-[2px]" />
      </main>

      {/* Transfer queue */}
      <section className="mt-1 flex min-h-0 flex-[173] flex-col border-t border-t-[#404040] pt-[3px]">
        <div role="tablist" className="flex items-end pl-1">
          {['Transfer', 'Queue'].map(tab => (
            <button
              key={tab}
              type="button"
              role="tab"
              aria-selected={activeTab === tab}
              onClick={() => setActiveTab(tab)}
              className={`rounded-t-sm border-t border-r-2 border-l border-t-white border-r-[#303030] border-l-white ${
                activeTab === tab ? 'h-5 px-[6px]' : 'h-[18px] px-1'
              }`}
            >
              {tab}
            </button>
          ))}
        </div>
        <div className="min-h-0 flex-1 border-t border-r-2 border-b-2 border-l border-t-white border-r-[#606060] border-b-[#606060] border-l-white p-[2px]">
          <div className="h-full overflow-hidden border-t-2 border-r border-b border-l-2 border-t-[#606060] border-r-white border-b-white border-l-[#606060] bg-white">
            <table aria-label={activeTab} className="w-full table-fixed border-separate border-spacing-0 whitespace-nowrap">
              <HeaderRow columns={transferColumns} />
            </table>
          </div>
        </div>
      </section>

      {/* Status bar */}
      <footer className="mt-px flex h-[22px] shrink-0 items-center gap-[3px] border-t border-t-white pl-[2px]">
        <span className="flex-1 truncate">Connected to vc13.vc.panix.com - /home/weiss</span>
        <span className={`h-5 shrink-0 whitespace-nowrap ${SUNKEN}`}>SSH2 - aes128-cbc - hmac-md</span>
        <span className={`h-5 w-[115px] overflow-hidden pl-px whitespace-nowrap ${SUNKEN}`}>5 items (0 Bytes)</span>
        <span className={`h-5 w-5 ${SUNKEN}`} />
        <span className={`flex h-5 w-5 items-center justify-center ${SUNKEN}`}>
          <Icon>
            <path d="M6 3h9v11H5M5 12l9-9" stroke="#808080" />
            <path d="M4 1h2v2H4zM8 0h2v2H8zM1 4h2v2H1zM0 8h3v3H0zM2 12h3v3H2zM7 13h3v3H7zM12 0h2v2h-2z" fill="#808080" />
          </Icon>
        </span>
        <span className={`h-5 w-5 ${SUNKEN}`} />
        <svg width="20" height="14" viewBox="0 0 20 14" className="self-end" aria-hidden="true">
          <path d="M7 14 20 1M11 14l9-9M15 14l5-5" stroke="#fff" />
          <path d="M8 14 20 2M12 14l8-8M16 14l4-4" stroke="#808080" strokeWidth="1.500" />
        </svg>
      </footer>
    </div>
  );
}
